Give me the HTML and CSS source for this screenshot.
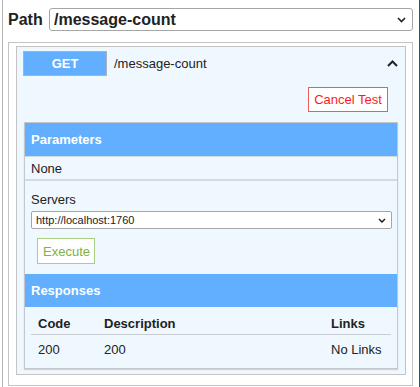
FILE: index.html
```html
<!DOCTYPE html>
<html lang="en">
<head>
  <meta charset="UTF-8" />
  <meta name="viewport" content="width=device-width, initial-scale=1.0"/>
  <title>Path tester</title>
  <link rel="stylesheet" href="styles.css">
</head>
<body>

<div class="frame">
  <div class="path-row">
    <label class="path-label">Path</label>
    <div class="path-select">
      <span>/message-count</span>
      <svg class="chev" width="9" height="6" viewBox="0 0 9 6"><path d="M1 1l3.5 3.5L8 1" fill="none" stroke="#222" stroke-width="1.6"/></svg>
    </div>
  </div>

  <div class="ops">
    <div class="op">
      <div class="op-head">
        <span class="method">GET</span>
        <span class="op-path">/message-count</span>
        <svg class="collapse" width="11" height="7" viewBox="0 0 11 7"><path d="M1 6l4.5-4.5L10 6" fill="none" stroke="#222" stroke-width="2"/></svg>
      </div>

      <div class="op-actions">
        <button class="btn cancel">Cancel Test</button>
      </div>

      <div class="section">
        <div class="section-head first">Parameters</div>
        <div class="params-none">None</div>

        <div class="servers">
          <div class="servers-label">Servers</div>
          <div class="server-select">
            <span>http://localhost:1760</span>
            <svg width="8" height="5" viewBox="0 0 8 5"><path d="M1 1l3 3 3-3" fill="none" stroke="#222" stroke-width="1.5"/></svg>
          </div>
          <button class="btn execute">Execute</button>
        </div>

        <div class="section-head">Responses</div>
        <table class="responses">
          <thead>
            <tr><th class="col-code">Code</th><th class="col-desc">Description</th><th>Links</th></tr>
          </thead>
          <tbody>
            <tr><td>200</td><td>200</td><td>No Links</td></tr>
          </tbody>
        </table>
      </div>
    </div>
  </div>
</div>

</body>
</html>
```

FILE: styles.css
```css
:root {
  --blue: #61affe;
  --op-bg: #eff7ff;
  --line: #c4c4c4;
  --text: #222222;
  --red: #ff1a1a;
  --green: #7cb342;
}

body {
  margin: 0;
  background: #fff;
  font-family: "Liberation Sans", Arial, sans-serif;
  color: var(--text);
}

.frame {
  margin-left: 2px;
  height: 387px;
  box-sizing: border-box;
  border-left: 1px solid #b4b4b4;
  border-right: 1px solid #1a5f6a;
  padding: 8px 6px 0 5px;
  overflow: hidden;
}

.path-row {
  display: flex;
  align-items: center;
  height: 23px;
}

.path-label {
  width: 41px;
  font-size: 16px;
  font-weight: bold;
}

.path-select {
  flex: 1;
  height: 23px;
  box-sizing: border-box;
  border: 1px solid #a6a6a6;
  border-radius: 3px;
  padding: 0 6px 0 4px;
  display: flex;
  align-items: center;
  justify-content: space-between;
  font-size: 16px;
  font-weight: bold;
}

.ops {
  margin-top: 11px;
  border: 1px solid var(--line);
  padding: 3px 6px 10px 7px;
}

.op {
  background: var(--op-bg);
  border: 1px solid var(--line);
  padding: 4px 7px 5px 6px;
}

.op-head {
  display: flex;
  align-items: center;
}

.method {
  width: 84px;
  height: 25px;
  box-sizing: border-box;
  border: 1px solid #a8b4c0;
  background: var(--blue);
  color: #fff;
  font-size: 13px;
  font-weight: bold;
  display: flex;
  align-items: center;
  justify-content: center;
}

.op-path {
  flex: 1;
  margin-left: 7px;
  font-size: 13px;
}

.collapse {
  margin-right: 0;
}

.op-actions {
  display: flex;
  justify-content: flex-end;
  padding-right: 10px;
  margin-top: 11px;
}

.btn {
  font-family: inherit;
  font-size: 13px;
  background: #fff;
  height: 25px;
  padding: 0 5px;
  cursor: pointer;
}

.cancel {
  width: 80px;
  color: var(--red);
  border: 1px solid #f05a5a;
}

.section {
  margin: 10px 0 0 1px;
  border: 1px solid #c4c8cc;
  box-shadow: 0 1px 1px rgba(0, 0, 0, 0.15);
}

.section-head {
  height: 33px;
  line-height: 33px;
  padding: 0 6px;
  background: var(--blue);
  color: #fff;
  font-size: 13px;
  font-weight: bold;
}

.section-head.first {
  border-bottom: 1px solid #d0d8e0;
}

.params-none {
  font-size: 13px;
  line-height: 15px;
  padding: 4px 6px 3px;
  border-bottom: 2px solid #d4dae2;
}

.servers {
  padding: 11px 5px 10px 6px;
}

.servers-label {
  font-size: 13px;
  line-height: 15px;
  margin-bottom: 4px;
}

.server-select {
  height: 18px;
  box-sizing: border-box;
  border: 1px solid #a6a6a6;
  border-radius: 2px;
  background: #fff;
  padding: 0 5px 0 4px;
  display: flex;
  align-items: center;
  justify-content: space-between;
  font-size: 11px;
}

.execute {
  margin: 9px 0 0 6px;
  height: 26px;
  width: 58px;
  color: var(--green);
  border: 1px solid #a9cf85;
}

.responses {
  width: 360px;
  margin: 0 0 0 6px;
  border-collapse: collapse;
  font-size: 13px;
  line-height: 15px;
  text-align: left;
}

.responses th {
  padding: 9px 7px 3px;
  border-bottom: 1px solid #c8ccd0;
}

.responses td {
  padding: 7px 7px 11px;
}

.col-code {
  width: 52px;
}

.col-desc {
  width: 213px;
}
```
